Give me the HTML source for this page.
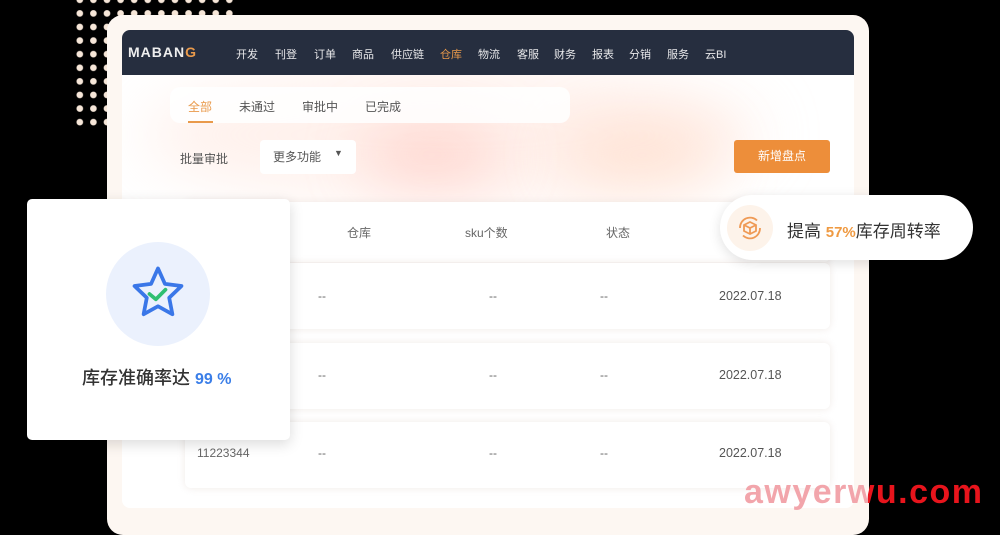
<!DOCTYPE html>
<html><head><meta charset="utf-8"><style>
*{margin:0;padding:0;box-sizing:border-box}
body{width:1000px;height:522px;background:#000;position:relative;overflow:hidden;font-family:"Liberation Sans","Noto Sans CJK SC",sans-serif}
.abs{position:absolute}
.dots{left:73px;top:0;width:160px;height:130px;background-image:radial-gradient(circle,#f6e6d8 3px,transparent 3.6px);background-size:13.6px 13.6px;background-position:0 -7px}
.main{left:107px;top:15px;width:762px;height:520px;background:#fdf7f2;border-radius:16px}
.inner{left:122px;top:30px;width:732px;height:478px;background:#fff;border-radius:8px;overflow:hidden}
.nav{left:0;top:0;width:732px;height:45px;background:#262e3f;color:#e8e8ea;font-size:11px}
.nav span{position:absolute;top:16px}
.glow{border-radius:50%;filter:blur(30px)}
.row{background:#fff;border-radius:6px;box-shadow:0 0 8px rgba(230,220,215,.6)}
.t{color:#666;font-size:12px;position:absolute}
.date{color:#555;font-size:12.5px;position:absolute}
</style></head><body>
<div class="abs dots"></div>
<div class="abs main"></div>
<div class="abs inner">
  <div class="abs glow" style="left:20px;top:40px;width:620px;height:130px;background:rgba(255,215,200,.35)"></div>
  <div class="abs glow" style="left:240px;top:95px;width:140px;height:60px;background:rgba(255,170,160,.4)"></div>
  <div class="abs glow" style="left:440px;top:95px;width:160px;height:60px;background:rgba(255,205,175,.45)"></div>
  <div class="abs nav">
    <span style="left:6px;top:14px;font-size:14px;font-weight:bold;letter-spacing:1px;color:#eee">MABAN<b style="color:#e99a4b">G</b></span>
    <span style="left:114px">开发</span><span style="left:153px">刊登</span><span style="left:192px">订单</span><span style="left:230px">商品</span><span style="left:269px">供应链</span><span style="left:318px;color:#e99a4b">仓库</span><span style="left:356px">物流</span><span style="left:395px">客服</span><span style="left:432px">财务</span><span style="left:470px">报表</span><span style="left:507px">分销</span><span style="left:545px">服务</span><span style="left:583px">云BI</span>
  </div>
  <div class="abs" style="left:48px;top:57px;width:400px;height:36px;background:rgba(255,255,255,.85);border-radius:10px"></div>
  <span class="abs" style="left:66px;top:68px;font-size:12px;color:#e99a4b">全部</span>
  <div class="abs" style="left:66px;top:91px;width:25px;height:2px;background:#e99a4b"></div>
  <span class="abs" style="left:117px;top:68px;font-size:12px;color:#555">未通过</span>
  <span class="abs" style="left:180px;top:68px;font-size:12px;color:#555">审批中</span>
  <span class="abs" style="left:243px;top:68px;font-size:12px;color:#555">已完成</span>
  <div class="abs" style="left:138px;top:110px;width:96px;height:34px;background:#fff;border-radius:4px"></div>
  <span class="abs" style="left:58px;top:120px;font-size:12px;color:#555">批量审批</span>
  <span class="abs" style="left:151px;top:118px;font-size:12px;color:#555">更多功能</span>
  <span class="abs" style="left:212px;top:118px;font-size:9px;color:#555">▼</span>
  <div class="abs" style="left:612px;top:110px;width:96px;height:33px;background:#ed8e3a;border-radius:3px;color:#fff;font-size:12px;text-align:center;line-height:33px">新增盘点</div>
  <div class="abs row" style="left:63px;top:172px;width:645px;height:60px"></div>
  <div class="abs row" style="left:63px;top:233px;width:645px;height:66px"></div>
  <div class="abs row" style="left:63px;top:313px;width:645px;height:66px"></div>
  <div class="abs row" style="left:63px;top:392px;width:645px;height:66px"></div>
  <span class="t" style="left:225px;top:194px">仓库</span>
  <span class="t" style="left:343px;top:194px">sku个数</span>
  <span class="t" style="left:484px;top:194px">状态</span>
  <span class="t" style="left:196px;top:259px">--</span><span class="t" style="left:367px;top:259px">--</span><span class="t" style="left:478px;top:259px">--</span><span class="date" style="left:597px;top:259px">2022.07.18</span>
  <span class="t" style="left:196px;top:338px">--</span><span class="t" style="left:367px;top:338px">--</span><span class="t" style="left:478px;top:338px">--</span><span class="date" style="left:597px;top:338px">2022.07.18</span>
  <span class="t" style="left:75px;top:416px">11223344</span>
  <span class="t" style="left:196px;top:416px">--</span><span class="t" style="left:367px;top:416px">--</span><span class="t" style="left:478px;top:416px">--</span><span class="date" style="left:597px;top:416px">2022.07.18</span>
</div>
<!-- left card -->
<div class="abs" style="left:27px;top:199px;width:263px;height:241px;background:#fff;border-radius:5px;box-shadow:0 4px 14px rgba(0,0,0,.15)"></div>
<div class="abs" style="left:106px;top:242px;width:104px;height:104px;border-radius:50%;background:#ebf1fd"></div>
<svg class="abs" style="left:126px;top:262px" width="64" height="64" viewBox="0 0 60 60"><path d="M30 6 L36.5 20.5 L52 22.5 L40.5 33.5 L43.5 49 L30 41.5 L16.5 49 L19.5 33.5 L8 22.5 L23.5 20.5 Z" fill="none" stroke="#3a77e8" stroke-width="3.5" stroke-linejoin="round"/><path d="M22 30 L28 35 L37 26" fill="none" stroke="#2fbf71" stroke-width="3.5" stroke-linecap="round" stroke-linejoin="round"/></svg>
<div class="abs" style="left:82px;top:364px;font-size:18px;color:#333;font-weight:500;white-space:nowrap">库存准确率达 <span style="color:#3a7ee8;font-weight:bold;font-size:16px">99 %</span></div>
<!-- right pill -->
<div class="abs" style="left:720px;top:195px;width:253px;height:65px;background:#fff;border-radius:33px;box-shadow:0 3px 12px rgba(0,0,0,.12)"></div>
<div class="abs" style="left:727px;top:205px;width:46px;height:46px;border-radius:50%;background:#fdf3ea"></div>
<svg class="abs" style="left:736px;top:214px" width="28" height="28" viewBox="0 0 28 28" fill="none" stroke="#ef9a55" stroke-width="1.8"><path d="M14 8 L20 11 L20 17 L14 20 L8 17 L8 11 Z M8 11 L14 14 L20 11 M14 14 L14 20"/><path d="M4 14 A10 10 0 0 1 21 6.5 M24 14 A10 10 0 0 1 7 21.5"/></svg>
<div class="abs" style="left:787px;top:217px;font-size:17px;color:#333;white-space:nowrap">提高 <span style="color:#ef9a42;font-weight:bold;font-size:15px">57%</span>库存周转率</div>
<div class="abs" style="left:744px;top:474px;font-size:34px;font-weight:bold;line-height:36px;letter-spacing:1.5px;background:linear-gradient(90deg,#f2a5ab 0,#f2a5ab 124px,#e8141c 124px);-webkit-background-clip:text;background-clip:text;color:transparent;font-family:'Liberation Sans',sans-serif;white-space:nowrap">awyerwu.com</div>
</body></html>
